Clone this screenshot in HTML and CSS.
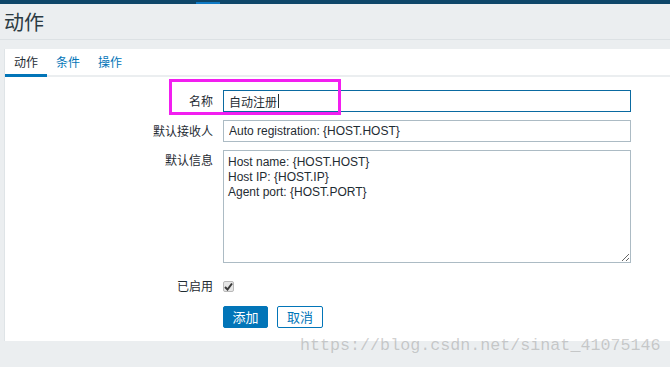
FILE: index.html
```html
<!DOCTYPE html>
<html lang="zh">
<head>
<meta charset="utf-8">
<title>动作</title>
<link rel="stylesheet" href="styles.css">
</head>
<body>
<div class="topbar"><div class="topbar-mark"></div></div>
<div class="header"><h1 class="title">动作</h1></div>
<div class="panel">
  <ul class="tabs">
    <li class="tab active">动作</li>
    <li class="tab">条件</li>
    <li class="tab">操作</li>
  </ul>
  <form class="form">
    <label class="lbl lbl-mid">名称</label>
    <div class="field"><div class="inp inp-focus"><span>自动注册</span><span class="caret"></span></div></div>
    <label class="lbl lbl-mid">默认接收人</label>
    <div class="field"><input class="inp" type="text" value="Auto registration: {HOST.HOST}"></div>
    <label class="lbl lbl-top">默认信息</label>
    <div class="field"><textarea class="ta">Host name: {HOST.HOST}
Host IP: {HOST.IP}
Agent port: {HOST.PORT}</textarea></div>
    <label class="lbl lbl-chk">已启用</label>
    <div class="field field-chk"><span class="chk"><svg width="9" height="9" viewBox="0 0 9 9"><path d="M1 5 L3.5 7.5 L8 1.5" fill="none" stroke="#3a3a3a" stroke-width="2"/></svg></span></div>
    <div></div>
    <div class="field buttons"><button type="button" class="btn btn-primary">添加</button><button type="button" class="btn btn-alt">取消</button></div>
  </form>
</div>
<div class="highlight"></div>
<div class="watermark">https://blog.csdn.net/sinat_41075146</div>
</body>
</html>
```

FILE: styles.css
```css
html, body {
  margin: 0;
  padding: 0;
}
body {
  background: #ebeef0;
  font-family: "Liberation Sans", "Noto Sans CJK SC", Arial, sans-serif;
  font-size: 12px;
  color: #1f2c33;
  width: 670px;
  height: 367px;
  overflow: hidden;
  position: relative;
}
.topbar {
  height: 4px;
  background: #0e4669;
  display: flex;
  align-items: flex-end;
}
.topbar-mark {
  margin-left: 196px;
  width: 24px;
  height: 2px;
  background: #0f7ac5;
}
.header {
  height: 35px;
  border-bottom: 1px solid #dce1e4;
  margin-bottom: 9px;
  display: flex;
  align-items: center;
}
.title {
  margin: 0 0 0 4px;
  font-family: "Noto Sans CJK SC", sans-serif;
  font-weight: normal;
  font-size: 20px;
  color: #2b3a42;
  line-height: 24px;
}
.panel {
  margin-left: 4px;
  background: #fff;
  border-left: 1px solid #dfe4e7;
  height: 292px;
}
.tabs {
  list-style: none;
  margin: 0;
  padding: 0;
  display: flex;
  height: 26px;
  border-bottom: 2px solid #ebeef0;
}
.tab {
  font-family: "Noto Sans CJK SC", sans-serif;
  padding: 0 9px;
  height: 26px;
  line-height: 26px;
  color: #0275b8;
  font-size: 12px;
  box-sizing: border-box;
}
.tab.active {
  color: #1f2c33;
  border-bottom: 3px solid #0275b8;
  height: 28px;
  margin-bottom: -2px;
}
.form {
  display: grid;
  grid-template-columns: 208px 408px;
  column-gap: 10px;
  row-gap: 8px;
  padding-top: 13px;
}
.lbl {
  font-family: "Noto Sans CJK SC", sans-serif;
  text-align: right;
  font-size: 12px;
  color: #1f2c33;
}
.lbl-mid {
  line-height: 22px;
}
.lbl-top {
  line-height: 20px;
}
.lbl-chk {
  line-height: 22px;
  margin-top: 4px;
}
.field {
  display: flex;
}
.inp {
  width: 408px;
  height: 22px;
  box-sizing: border-box;
  border: 1px solid #acbbc4;
  padding: 0 5px;
  margin: 0;
  font-family: "Liberation Sans", "Noto Sans CJK SC", Arial, sans-serif;
  font-size: 12px;
  color: #1f2c33;
  outline: none;
}
.inp-focus {
  border-color: #0a6aa1;
  font-family: "Noto Sans CJK SC", sans-serif;
  display: flex;
  align-items: center;
}
.caret {
  width: 1px;
  height: 14px;
  background: #1f2c33;
  margin-left: 1px;
}
.ta {
  width: 408px;
  height: 113px;
  box-sizing: border-box;
  border: 1px solid #acbbc4;
  padding: 4px 4px;
  margin: 0;
  font-family: "Liberation Sans", Arial, sans-serif;
  font-size: 12px;
  line-height: 15px;
  color: #1f2c33;
  outline: none;
  resize: both;
}
.field-chk {
  margin-top: 4px;
  align-items: center;
  height: 22px;
}
.chk {
  width: 11px;
  height: 11px;
  box-sizing: border-box;
  border: 1px solid #b9b9b9;
  background: #e6e6e6;
  border-radius: 2px;
  display: flex;
  align-items: center;
  justify-content: center;
}
.buttons {
  gap: 9px;
  margin-top: 1px;
}
.btn {
  height: 22px;
  box-sizing: border-box;
  padding: 0;
  font-family: "Noto Sans CJK SC", sans-serif;
  font-size: 13px;
  line-height: 20px;
  border-radius: 2px;
  border: 1px solid #0275b8;
}
.btn-primary {
  width: 45px;
  background: #0275b8;
  color: #fff;
}
.btn-alt {
  width: 46px;
  background: #fff;
  color: #0275b8;
}
.highlight {
  position: absolute;
  left: 169px;
  top: 79px;
  width: 172px;
  height: 36px;
  box-sizing: border-box;
  border: 3px solid #f21ef0;
}
.watermark {
  position: absolute;
  left: 300px;
  top: 336px;
  font-family: "Liberation Mono", "Courier New", monospace;
  font-size: 16.7px;
  line-height: 20px;
  color: rgba(150, 150, 150, 0.45);
  white-space: nowrap;
}
```
